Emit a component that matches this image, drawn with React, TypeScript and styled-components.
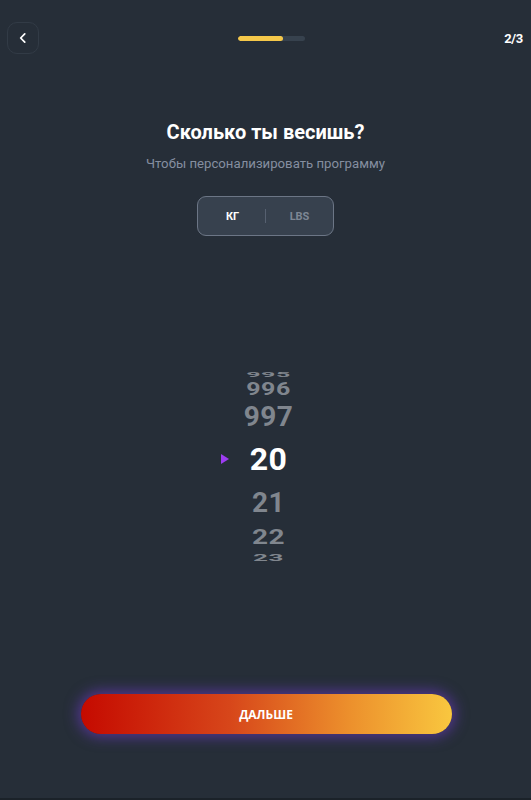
import styled, { createGlobalStyle } from "styled-components";

const GlobalStyle = createGlobalStyle`
  html, body {
    margin: 0;
    padding: 0;
    background: #262e38;
  }
  body {
    font-family: Roboto, "Noto Sans", sans-serif;
  }
`;

type WheelItem = {
  value: number;
  height: number;
  size: number;
  squash: number;
  active?: boolean;
};

const wheel: WheelItem[] = [
  { value: 995, height: 9, size: 25, squash: 0.28 },
  { value: 996, height: 19, size: 25, squash: 0.72 },
  { value: 997, height: 38, size: 28, squash: 0.98 },
  { value: 20, height: 46, size: 32, squash: 1, active: true },
  { value: 21, height: 42, size: 28, squash: 1 },
  { value: 22, height: 28, size: 28, squash: 0.7 },
  { value: 23, height: 12, size: 26, squash: 0.38 },
];

const App = () => {
  return (
    <Screen>
      <GlobalStyle />
      <Header>
        <BackButton>
          <svg width="14" height="14" viewBox="0 0 24 24" fill="none">
            <path
              d="M15 5L8 12l7 7"
              stroke="#fff"
              strokeWidth="3"
              strokeLinecap="round"
              strokeLinejoin="round"
            />
          </svg>
        </BackButton>
        <Progress>
          <ProgressFill />
        </Progress>
        <Step>2/3</Step>
      </Header>

      <Title>Сколько ты весишь?</Title>
      <Subtitle>Чтобы персонализировать программу</Subtitle>

      <UnitSwitch>
        <Unit active>КГ</Unit>
        <UnitDivider />
        <Unit>LBS</Unit>
      </UnitSwitch>

      <Picker>
        {wheel.map((item) => (
          <WheelRow key={item.value} height={item.height}>
            {item.active && <Marker />}
            <WheelValue
              size={item.size}
              squash={item.squash}
              active={item.active}
            >
              {item.value}
            </WheelValue>
          </WheelRow>
        ))}
      </Picker>

      <Footer>
        <NextButton>ДАЛЬШЕ</NextButton>
      </Footer>
    </Screen>
  );
};

const Screen = styled.div`
  width: 531px;
  height: 800px;
  box-sizing: border-box;
  background: #262e38;
  border-bottom: 2px solid #1b2229;
  display: flex;
  flex-direction: column;
  align-items: center;
  overflow: hidden;
`;

const Header = styled.div`
  width: 100%;
  box-sizing: border-box;
  padding: 22px 8px 0 7px;
  display: flex;
  justify-content: space-between;
  align-items: center;
`;

const BackButton = styled.div`
  width: 30px;
  height: 30px;
  border: 1px solid #323b46;
  border-radius: 10px;
  display: flex;
  align-items: center;
  justify-content: center;
`;

const Progress = styled.div`
  width: 67px;
  height: 5px;
  border-radius: 3px;
  background: #37424e;
  overflow: hidden;
`;

const ProgressFill = styled.div`
  width: 45px;
  height: 100%;
  border-radius: 3px;
  background: #f5c84a;
`;

const Step = styled.div`
  color: #fff;
  font-size: 13px;
  font-weight: 700;
  letter-spacing: -0.3px;
`;

const Title = styled.h1`
  margin: 65px 0 0;
  color: #fff;
  font-size: 20px;
  font-weight: 700;
  line-height: 26px;
`;

const Subtitle = styled.p`
  margin: 10px 0 0;
  color: #858ea0;
  font-size: 13.2px;
  line-height: 18px;
`;

const UnitSwitch = styled.div`
  margin-top: 23px;
  width: 137px;
  height: 40px;
  box-sizing: border-box;
  border: 1px solid #6c7686;
  border-radius: 9px;
  background: #37414e;
  display: grid;
  grid-template-columns: 1fr 1px 1fr;
  align-items: center;
`;

const Unit = styled.div<{ active?: boolean }>`
  text-align: center;
  font-size: 11px;
  font-weight: 700;
  color: ${({ active }) => (active ? "#fff" : "#7d8694")};
  padding-left: ${({ active }) => (active ? "2px" : "0")};
`;

const UnitDivider = styled.div`
  width: 1px;
  height: 14px;
  background: #566070;
`;

const Picker = styled.div`
  margin-top: 134px;
  margin-left: 6px;
  width: 140px;
  display: flex;
  flex-direction: column;
  align-items: center;
`;

const WheelRow = styled.div<{ height: number }>`
  position: relative;
  width: 100%;
  height: ${({ height }) => height}px;
  display: flex;
  align-items: center;
  justify-content: center;
`;

const WheelValue = styled.span<{ size: number; squash: number; active?: boolean }>`
  display: block;
  font-size: ${({ size }) => size}px;
  line-height: 1;
  font-weight: 700;
  color: ${({ active }) => (active ? "#ffffff" : "#80868e")};
  transform: scaleY(${({ squash }) => squash});
  letter-spacing: 0.5px;
`;

const Marker = styled.span`
  position: absolute;
  left: 22px;
  top: 50%;
  margin-top: -5px;
  width: 0;
  height: 0;
  border-top: 5px solid transparent;
  border-bottom: 5px solid transparent;
  border-left: 8px solid #9d3df2;
`;

const Footer = styled.div`
  margin-top: auto;
  margin-bottom: 64px;
  width: 100%;
  display: flex;
  justify-content: center;
`;

const NextButton = styled.div`
  width: 371px;
  height: 40px;
  border-radius: 20px;
  margin-left: 1px;
  background: linear-gradient(90deg, #c50a00 0%, #d7461a 40%, #ec8f2c 72%, #f9c73f 100%);
  box-shadow: 0 0 14px 3px rgba(120, 60, 220, 0.55);
  display: flex;
  align-items: center;
  justify-content: center;
  color: #fff;
  font-family: "Open Sans", "Noto Sans", sans-serif;
  font-size: 12px;
  font-weight: 700;
`;

export default App;
